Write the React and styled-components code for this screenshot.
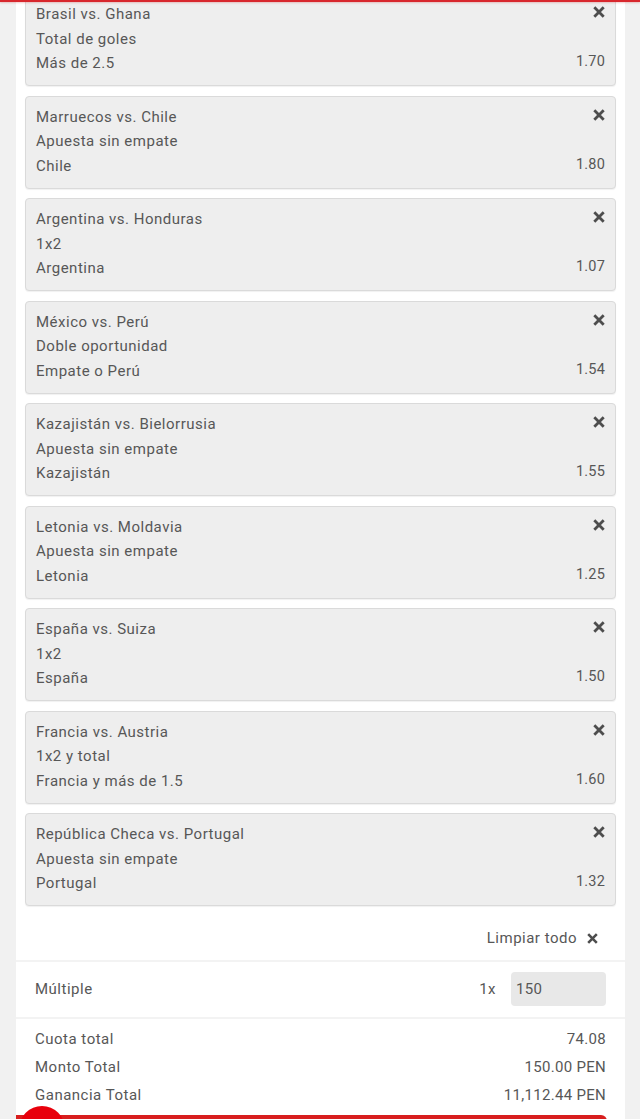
import React from "react";
import styled, { createGlobalStyle } from "styled-components";

const GlobalStyle = createGlobalStyle`
  html, body {
    margin: 0;
    padding: 0;
    background: #f1f1f1;
    overflow: hidden;
  }
  body {
    font-family: Roboto, "Noto Sans", "Liberation Sans", sans-serif;
    color: #575757;
  }
  * { box-sizing: border-box; }
`;

const TopLine = styled.div`
  position: fixed;
  top: 0;
  left: 0;
  right: 0;
  height: 2px;
  background: #d8272d;
  box-shadow: 0 1px 2px rgba(200, 30, 30, 0.25);
  z-index: 5;
`;

const Page = styled.div`
  height: 1119px;
  overflow: hidden;
`;

const Panel = styled.main`
  width: 609px;
  margin: -7px 0 0 16px;
  background: #fff;
  min-height: 1200px;
`;

const List = styled.div`
  display: flex;
  flex-direction: column;
  gap: 9.5px;
  padding: 0 9px;
`;

const Card = styled.div`
  display: grid;
  grid-template-columns: 1fr auto;
  background: #eeeeee;
  border: 1px solid #dadada;
  border-radius: 4px;
  box-shadow: 0 1px 1px rgba(0, 0, 0, 0.06);
  padding: 8px 10px 9px 10px;
  height: 93px;
`;

const Lines = styled.div`
  display: flex;
  flex-direction: column;
`;

const Line = styled.div`
  font-size: 15px;
  line-height: 24.5px;
  color: #575757;
  letter-spacing: 0.5px;
`;

const Side = styled.div`
  display: flex;
  flex-direction: column;
  align-items: flex-end;
  justify-content: space-between;
  padding: 4px 0 4px 0;
`;

const Odds = styled.div`
  font-size: 14.5px;
  line-height: 20px;
  letter-spacing: 0.2px;
  color: #575757;
`;

const CloseIcon = ({ size = 12 }) => (
  <svg width={size} height={size} viewBox="0 0 12 12" aria-hidden="true">
    <path
      d="M1.3 1.3 L10.7 10.7 M10.7 1.3 L1.3 10.7"
      stroke="#4d4d4d"
      strokeWidth="2.8"
      fill="none"
    />
  </svg>
);

const ClearRow = styled.div`
  display: flex;
  justify-content: flex-end;
  align-items: center;
  gap: 10px;
  padding: 20px 27px 10px 0;
  font-size: 15px;
  line-height: 24px;
  letter-spacing: 0.5px;
  color: #575757;
`;

const Divider = styled.div`
  height: 2px;
  background: #f3f3f3;
`;

const StakeRow = styled.div`
  display: flex;
  align-items: center;
  padding: 10px 19px 11px 19px;
  font-size: 15px;
  letter-spacing: 0.5px;
  color: #575757;
`;

const StakeLabel = styled.div`
  flex: 1;
`;

const Multiplier = styled.div`
  margin-right: 15px;
`;

const StakeInput = styled.div`
  width: 95px;
  height: 34px;
  background: #e8e8e8;
  border-radius: 4px;
  display: flex;
  align-items: center;
  padding-left: 5px;
  font-size: 15px;
  letter-spacing: 0.3px;
  color: #575757;
`;

const Summary = styled.div`
  display: flex;
  flex-direction: column;
  padding: 6px 19px 0 19px;
`;

const SummaryRow = styled.div`
  display: flex;
  justify-content: space-between;
  font-size: 15px;
  line-height: 28px;
  color: #575757;
`;

const Label = styled.span`
  letter-spacing: 0.5px;
`;

const Value = styled.span`
  letter-spacing: 0.3px;
`;

const BottomBar = styled.div`
  position: fixed;
  left: 16px;
  width: 591px;
  top: 1115px;
  height: 40px;
  background: #d81e1e;
  border-radius: 0 6px 0 0;
  z-index: 5;
`;

const BottomDot = styled.div`
  position: fixed;
  left: 19px;
  top: 1106px;
  width: 46px;
  height: 46px;
  border-radius: 50%;
  background: #e8000c;
  z-index: 6;
`;

const bets = [
  ["Brasil vs. Ghana", "Total de goles", "Más de 2.5", "1.70"],
  ["Marruecos vs. Chile", "Apuesta sin empate", "Chile", "1.80"],
  ["Argentina vs. Honduras", "1x2", "Argentina", "1.07"],
  ["México vs. Perú", "Doble oportunidad", "Empate o Perú", "1.54"],
  ["Kazajistán vs. Bielorrusia", "Apuesta sin empate", "Kazajistán", "1.55"],
  ["Letonia vs. Moldavia", "Apuesta sin empate", "Letonia", "1.25"],
  ["España vs. Suiza", "1x2", "España", "1.50"],
  ["Francia vs. Austria", "1x2 y total", "Francia y más de 1.5", "1.60"],
  ["República Checa vs. Portugal", "Apuesta sin empate", "Portugal", "1.32"],
];

const totals = [
  ["Cuota total", "74.08"],
  ["Monto Total", "150.00 PEN"],
  ["Ganancia Total", "11,112.44 PEN"],
];

export default function App() {
  return (
    <>
      <GlobalStyle />
      <TopLine />
      <Page>
        <Panel>
          <List>
            {bets.map(([match, market, pick, odds]) => (
              <Card key={match}>
                <Lines>
                  <Line>{match}</Line>
                  <Line>{market}</Line>
                  <Line>{pick}</Line>
                </Lines>
                <Side>
                  <CloseIcon />
                  <Odds>{odds}</Odds>
                </Side>
              </Card>
            ))}
          </List>
          <ClearRow>
            <span>Limpiar todo</span>
            <CloseIcon size={11} />
          </ClearRow>
          <Divider />
          <StakeRow>
            <StakeLabel>Múltiple</StakeLabel>
            <Multiplier>1x</Multiplier>
            <StakeInput>150</StakeInput>
          </StakeRow>
          <Divider />
          <Summary>
            {totals.map(([label, value]) => (
              <SummaryRow key={label}>
                <Label>{label}</Label>
                <Value>{value}</Value>
              </SummaryRow>
            ))}
          </Summary>
        </Panel>
      </Page>
      <BottomBar />
      <BottomDot />
    </>
  );
}
